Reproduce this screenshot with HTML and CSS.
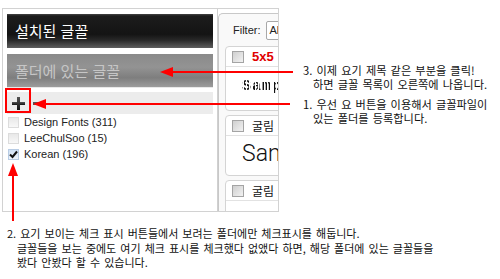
FILE: index.html
```html
<!DOCTYPE html>
<html lang="ko">
<head>
    <meta charset="UTF-8">
    <title>폴더에 있는 글꼴 사용법</title>
    <link rel="stylesheet" href="styles.css">
</head>
<body>
<div class="page">

    <div class="top">
        <!-- Screenshot of the font manager -->
        <div class="shot">
            <div class="left-pane">
                <div class="bar bar-dark">설치된 글꼴</div>
                <div class="bar bar-gray">폴더에 있는 글꼴</div>
                <div class="toolbar">
                    <svg class="icon-plus" width="13" height="13" viewBox="0 0 13 13">
                        <defs>
                            <linearGradient id="dark" x1="0" y1="0" x2="0" y2="1">
                                <stop offset="0" stop-color="#555"/>
                                <stop offset="1" stop-color="#111"/>
                            </linearGradient>
                        </defs>
                        <rect x="0" y="5" width="13" height="3" fill="url(#dark)"/>
                        <rect x="5" y="0" width="3" height="13" fill="url(#dark)"/>
                    </svg>
                    <svg class="icon-minus" width="8" height="3" viewBox="0 0 8 3">
                        <rect x="0" y="0" width="8" height="3" fill="#555"/>
                    </svg>
                </div>
                <ul class="folders">
                    <li><span class="cb"></span>Design Fonts (311)</li>
                    <li><span class="cb"></span>LeeChulSoo (15)</li>
                    <li>
                        <span class="cb cb-checked">
                            <svg width="9" height="9" viewBox="0 0 9 9"><path d="M1 4.5 L3.5 7 L8 1.5" fill="none" stroke="#111" stroke-width="2"/></svg>
                        </span>Korean (196)
                    </li>
                </ul>
            </div>

            <div class="right-pane">
                <div class="panel">
                    <div class="filter-row">
                        <span class="filter-label">Filter:</span>
                        <span class="filter-select">All</span>
                    </div>
                    <div class="font-list">
                        <div class="card">
                            <div class="card-head"><span class="card-cb"></span><span class="card-name name-red">5x5</span></div>
                            <div class="card-preview preview-dots">Sample</div>
                        </div>
                        <div class="card">
                            <div class="card-head"><span class="card-cb"></span><span class="card-name">굴림</span></div>
                            <div class="card-preview preview-thin">Sample</div>
                        </div>
                        <div class="card">
                            <div class="card-head"><span class="card-cb"></span><span class="card-name">굴림</span></div>
                            <div class="card-preview"></div>
                        </div>
                    </div>
                </div>
            </div>
        </div>

        <!-- Notes to the right -->
        <div class="notes">
            <p class="note">3. 이제 요기 제목 같은 부분을 클릭!<br>하면 글꼴 목록이 오른쪽에 나옵니다.</p>
            <p class="note">1. 우선 요 버튼을 이용해서 글꼴파일이<br>있는 폴더를 등록합니다.</p>
        </div>
    </div>

    <p class="note note-bottom">2. 요기 보이는 체크 표시 버튼들에서 보려는 폴더에만 체크표시를 해둡니다.<br>글꼴들을 보는 중에도 여기 체크 표시를 체크했다 없앴다 하면, 해당 폴더에 있는 글꼴들을<br>봤다 안봤다 할 수 있습니다.</p>

    <!-- Red marks drawn over the screenshot -->
    <svg class="marks" width="500" height="279" viewBox="0 0 500 279">
        <rect x="6" y="89" width="24" height="23" fill="none" stroke="#f00" stroke-width="2"/>
        <line x1="172" y1="72" x2="293" y2="72" stroke="#f00" stroke-width="2"/>
        <polygon points="160,72 173,67 173,77" fill="#f00"/>
        <line x1="45" y1="104" x2="290" y2="104" stroke="#f00" stroke-width="2"/>
        <polygon points="33,104 46,99 46,109" fill="#f00"/>
        <line x1="13" y1="175" x2="13" y2="221" stroke="#f00" stroke-width="2"/>
        <polygon points="13,163 8,176 18,176" fill="#f00"/>
    </svg>

</div>
</body>
</html>
```

FILE: styles.css
```css
body {
    margin: 0;
    background-color: #fff;
    font-family: "Noto Sans CJK KR", sans-serif;
    color: #111;
}

.page {
    position: relative;
    width: 500px;
    height: 279px;
    overflow: hidden;
}

.top {
    display: flex;
    align-items: flex-start;
}

/* Screenshot */
.shot {
    display: flex;
    flex: none;
    width: 275px;
    height: 202px;
    margin: 8px 0 0 2px;
    border: 1px solid #d2d2d2;
    background-color: #fff;
    overflow: hidden;
}

.left-pane {
    flex: none;
    width: 206px;
    padding: 5px 4px 0;
    border-right: 1px solid #d0d0d0;
    background-color: #fff;
}

.bar {
    height: 34px;
    line-height: 34px;
    padding-left: 8px;
    font-size: 15px;
}

.bar-dark {
    color: #fff;
    background: linear-gradient(#444 0, #1c1c1c 2px, #141414 60%, #2a2a2a 78%, #5e5e5e 100%);
}

.bar-gray {
    margin-top: 6px;
    color: #c6c6c6;
    background: linear-gradient(#8a8a8a 0, #939393 40%, #7e7e7e 72%, #9c9c9c 100%);
    border-bottom: 1px solid #e8e8e8;
    height: 33px;
}

.toolbar {
    display: flex;
    align-items: center;
    height: 22px;
    margin-top: 4px;
    padding-left: 5px;
    background-color: #ececec;
}

.icon-minus {
    margin-left: 8px;
}

.folders {
    list-style: none;
    margin: 0;
    padding: 0;
}

.folders li {
    display: flex;
    align-items: center;
    height: 16px;
    font-family: "Liberation Sans", sans-serif;
    font-size: 11px;
    color: #222;
}

.cb {
    display: inline-flex;
    align-items: center;
    justify-content: center;
    box-sizing: border-box;
    width: 11px;
    height: 11px;
    margin: 0 5px 0 1px;
    border: 1px solid #dcdcdc;
    background: linear-gradient(#e8e8e8, #f8f8f8);
}

.cb-checked {
    border-color: #b8cce4;
    background: linear-gradient(#cfe0f4, #eef4fb);
}

/* Right side of the screenshot */
.right-pane {
    flex: 1;
    padding-top: 4px;
    background-color: #fff;
}

.panel {
    height: 100%;
    border-top: 1px solid #c8c8c8;
    border-left: 1px solid #c8c8c8;
    border-radius: 5px 0 0 0;
    background-color: #f9f9f9;
}

.filter-row {
    display: flex;
    align-items: center;
    height: 32px;
    padding-left: 14px;
    font-family: "Liberation Sans", sans-serif;
    font-size: 11px;
    color: #222;
    white-space: nowrap;
}

.filter-select {
    margin-left: 5px;
    height: 17px;
    line-height: 17px;
    padding: 0 20px 0 3px;
    border: 1px solid #a8a8a8;
    border-radius: 2px;
    background-color: #fff;
}

.font-list {
    margin-left: 6px;
}

.card {
    margin-bottom: 4px;
    border: 1px solid #d4d4d4;
    border-radius: 4px;
    background-color: #fff;
    overflow: hidden;
    white-space: nowrap;
}

.card-head {
    display: flex;
    align-items: center;
    height: 19px;
    border-bottom: 1px solid #e2e2e2;
}

.card-cb {
    box-sizing: border-box;
    width: 12px;
    height: 12px;
    margin: 0 8px 0 6px;
    border: 1px solid #a4a4a4;
    background: linear-gradient(135deg, #cfcfcf, #f2f2f2);
}

.card-name {
    font-size: 12px;
    color: #111;
}

.name-red {
    font-family: "Liberation Sans", sans-serif;
    font-size: 13px;
    font-weight: bold;
    color: #e00000;
}

.card-preview {
    height: 43px;
    padding-left: 16px;
}

.preview-dots {
    line-height: 40px;
    font-family: "Liberation Mono", monospace;
    font-size: 15px;
    font-weight: bold;
    letter-spacing: 1px;
    color: transparent;
    background: repeating-linear-gradient(90deg, #111 0 2px, transparent 2px 3px);
    -webkit-background-clip: text;
    background-clip: text;
}

.preview-thin {
    height: 39px;
    line-height: 36px;
    font-family: Roboto, sans-serif;
    font-size: 23px;
    font-weight: 300;
    color: #111;
}

/* Notes */
.notes {
    padding: 63px 0 0 24px;
}

.note {
    margin: 0;
    padding-left: 10px;
    text-indent: -10px;
    font-size: 11.2px;
    line-height: 14px;
    word-spacing: 1px;
    color: #111;
    white-space: nowrap;
}

.note + .note {
    margin-top: 6px;
}

.note-bottom {
    margin-top: 14px;
    margin-left: 7px;
    font-size: 11px;
    line-height: 14.5px;
}

.marks {
    position: absolute;
    left: 0;
    top: 0;
    pointer-events: none;
}
```
